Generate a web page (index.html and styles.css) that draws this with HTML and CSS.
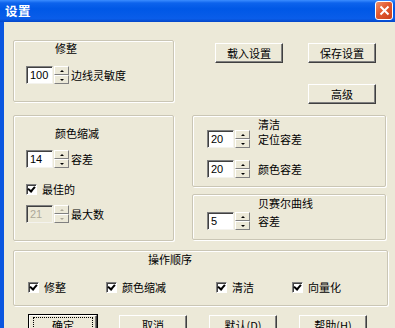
FILE: index.html
```html
<!DOCTYPE html>
<html lang="zh-CN">
<head>
    <meta charset="UTF-8">
    <meta name="viewport" content="width=device-width, initial-scale=1.0">
    <title>设置</title>
    <link rel="stylesheet" href="styles.css">
</head>
<body>
<div class="window">
    <div class="titlebar">
        <span class="title">设置</span>
        <span class="close">
            <svg width="11" height="11" viewBox="0 0 11 11"><path d="M1.5 1.5 L9.5 9.5 M9.5 1.5 L1.5 9.5" stroke="#fff" stroke-width="2" fill="none"/></svg>
        </span>
    </div>
    <div class="client">
        <div class="row rowTop">
            <div class="group groupTrim">
                <div class="groupTitle">修整</div>
                <div class="field">
                    <span class="edit">100</span>
                    <span class="spin"><span class="up"></span><span class="down"></span></span>
                    <span class="label">边线灵敏度</span>
                </div>
            </div>
            <div class="actions">
                <button class="button">载入设置</button>
                <button class="button">保存设置</button>
                <button class="button advanced">高级</button>
            </div>
        </div>

        <div class="row rowMid">
            <div class="group groupColor">
                <div class="groupTitle">颜色缩减</div>
                <div class="field">
                    <span class="edit">14</span>
                    <span class="spin"><span class="up"></span><span class="down"></span></span>
                    <span class="label">容差</span>
                </div>
                <label class="check best"><span class="box checked"></span>最佳的</label>
                <div class="field disabled">
                    <span class="edit">21</span>
                    <span class="spin"><span class="up"></span><span class="down"></span></span>
                    <span class="label">最大数</span>
                </div>
            </div>
            <div class="rightCol">
                <div class="group groupClean">
                    <div class="groupTitle">清洁</div>
                    <div class="field">
                        <span class="edit">20</span>
                        <span class="spin"><span class="up"></span><span class="down"></span></span>
                        <span class="label">定位容差</span>
                    </div>
                    <div class="field second">
                        <span class="edit">20</span>
                        <span class="spin"><span class="up"></span><span class="down"></span></span>
                        <span class="label">颜色容差</span>
                    </div>
                </div>
                <div class="group groupBezier">
                    <div class="groupTitle">贝赛尔曲线</div>
                    <div class="field">
                        <span class="edit">5</span>
                        <span class="spin"><span class="up"></span><span class="down"></span></span>
                        <span class="label">容差</span>
                    </div>
                </div>
            </div>
        </div>

        <div class="group groupOrder">
            <div class="groupTitle">操作顺序</div>
            <div class="checks">
                <label class="check c1"><span class="box checked"></span>修整</label>
                <label class="check c2"><span class="box checked"></span>颜色缩减</label>
                <label class="check c3"><span class="box checked"></span>清洁</label>
                <label class="check"><span class="box checked"></span>向量化</label>
            </div>
        </div>

        <div class="footer">
            <button class="button default"><span class="focus">确定</span></button>
            <button class="button">取消</button>
            <button class="button">默认(D)</button>
            <button class="button">帮助(H)</button>
        </div>
    </div>
</div>
</body>
</html>
```

FILE: styles.css
```css
body {
    margin: 0;
    background: #ece9d8;
    font-family: "Noto Sans CJK SC", "DejaVu Sans", sans-serif;
    font-size: 11px;
    color: #000;
    overflow: hidden;
}
.window {
    width: 395px;
    height: 328px;
    display: flex;
    flex-direction: column;
}
.titlebar {
    height: 22px;
    flex: none;
    display: flex;
    align-items: center;
    justify-content: space-between;
    background: linear-gradient(#3b8dff 0, #0d63ec 3px, #0058e6 40%, #0a5de9 85%, #0446c8 100%);
    padding: 0 2px 0 5px;
}
.title {
    color: #fff;
    font-weight: bold;
    font-size: 12.5px;
    letter-spacing: 0.5px;
    line-height: 14px;
    margin-top: -1px;
}
.close {
    width: 16px;
    height: 17px;
    margin-top: -1px;
    border: 1px solid #fff;
    border-radius: 3px;
    background: linear-gradient(135deg, #f0906c 0, #e3582e 45%, #c8401c 100%);
    display: flex;
    align-items: center;
    justify-content: center;
}
.client {
    flex: 1;
    border-left: 4px solid #0a56e0;
    padding: 18px 0 0 9px;
}
.row {
    display: flex;
}

/* group frames */
.group {
    border: 1px solid #cac6b5;
    border-radius: 2px;
    box-shadow: inset 1px 1px 0 #fff, 1px 1px 0 #fff;
    box-sizing: border-box;
}
.groupTitle {
    line-height: 13px;
    white-space: nowrap;
}
.groupTrim {
    width: 161px;
    height: 62px;
    padding: 1px 0 0 12px;
}
.groupTrim .groupTitle { padding-left: 29px; }
.groupTrim .field { margin-top: 11px; }

.actions {
    display: grid;
    grid-template-columns: 68px 68px;
    column-gap: 25px;
    row-gap: 21px;
    margin: 3px 0 0 41px;
    align-content: start;
}
.advanced { grid-column: 2; }

.rowMid { margin-top: 11px; }
.groupColor {
    width: 161px;
    height: 126px;
    padding: 11px 0 0 12px;
}
.groupColor .groupTitle { padding-left: 29px; }
.groupColor .field { margin-top: 10px; }
.groupColor .best { margin-top: 15px; }
.groupColor .disabled { margin-top: 10px; }

.rightCol {
    margin-left: 18px;
    width: 194px;
    display: flex;
    flex-direction: column;
    gap: 7px;
}
.groupClean {
    height: 72px;
    padding: 2px 0 0 14px;
}
.groupBezier {
    height: 46px;
    padding: 2px 0 0 14px;
}
.rightCol .groupTitle { padding-left: 51px; }
.rightCol .label { margin-left: 8px; }
.groupClean .field { margin-top: -1px; }
.groupClean .second { margin-top: 12px; }
.groupBezier .field { margin-top: 2px; }

.groupOrder {
    width: 375px;
    height: 56px;
    margin-top: 9px;
    padding: 2px 0 0 14px;
}
.groupOrder .groupTitle { padding-left: 120px; }
.checks {
    display: flex;
    margin-top: 15px;
}
.c1 { width: 78px; }
.c2 { width: 110px; }
.c3 { width: 76px; }

/* spinner fields */
.field {
    display: flex;
    align-items: center;
    height: 18px;
}
.edit {
    width: 27px;
    height: 18px;
    box-sizing: border-box;
    background: #fff;
    border: 1px solid;
    border-color: #808080 #f4f3ee #f4f3ee #808080;
    box-shadow: inset 1px 1px 0 #404040;
    padding: 0 0 0 3px;
    line-height: 16px;
    font-family: "Liberation Sans", Arial, sans-serif;
    font-size: 11px;
}
.spin {
    width: 15px;
    height: 18px;
    display: flex;
    flex-direction: column;
    margin-left: 1px;
}
.spin span {
    flex: 1;
    box-sizing: border-box;
    background: #ece9d8;
    border: 1px solid;
    border-color: #fff #808080 #808080 #fff;
    display: flex;
    align-items: center;
    justify-content: center;
}
.spin .up::after,
.spin .down::after {
    content: "";
    border-left: 2px solid transparent;
    border-right: 2px solid transparent;
}
.spin .up::after { border-bottom: 2px solid #000; }
.spin .down::after { border-top: 2px solid #000; }
.label {
    margin-left: 2px;
    white-space: nowrap;
}
.disabled .edit {
    background: #ece9d8;
    color: #aca899;
}
.disabled .spin .up::after { border-bottom-color: #aca899; }
.disabled .spin .down::after { border-top-color: #aca899; }

/* checkboxes */
.check {
    display: flex;
    align-items: center;
    height: 12px;
    white-space: nowrap;
}
.box {
    width: 11px;
    height: 11px;
    box-sizing: border-box;
    background: #fff;
    border: 1px solid;
    border-color: #808080 #fff #fff #808080;
    box-shadow: inset 1px 1px 0 #404040;
    margin-right: 5px;
    position: relative;
}
.box.checked::after {
    content: "";
    position: absolute;
    left: 2px;
    top: 0px;
    width: 3px;
    height: 5px;
    border: solid #000;
    border-width: 0 2px 2px 0;
    transform: rotate(40deg);
}

/* push buttons */
.button {
    width: 68px;
    height: 20px;
    padding: 0;
    background: #ece9d8;
    border: 1px solid;
    border-color: #fff #404040 #404040 #fff;
    box-shadow: inset -1px -1px 0 #808080;
    font-family: "Noto Sans CJK SC", "DejaVu Sans", sans-serif;
    font-size: 11px;
    color: #000;
    line-height: 16px;
}
.footer {
    display: flex;
    gap: 22px;
    margin: 9px 0 0 16px;
}
.default {
    outline: 1px solid #000;
    outline-offset: 0;
    display: flex;
    align-items: center;
    justify-content: center;
}
.focus {
    display: block;
    width: 58px;
    height: 14px;
    line-height: 14px;
    border: 1px dotted #000;
}
```
